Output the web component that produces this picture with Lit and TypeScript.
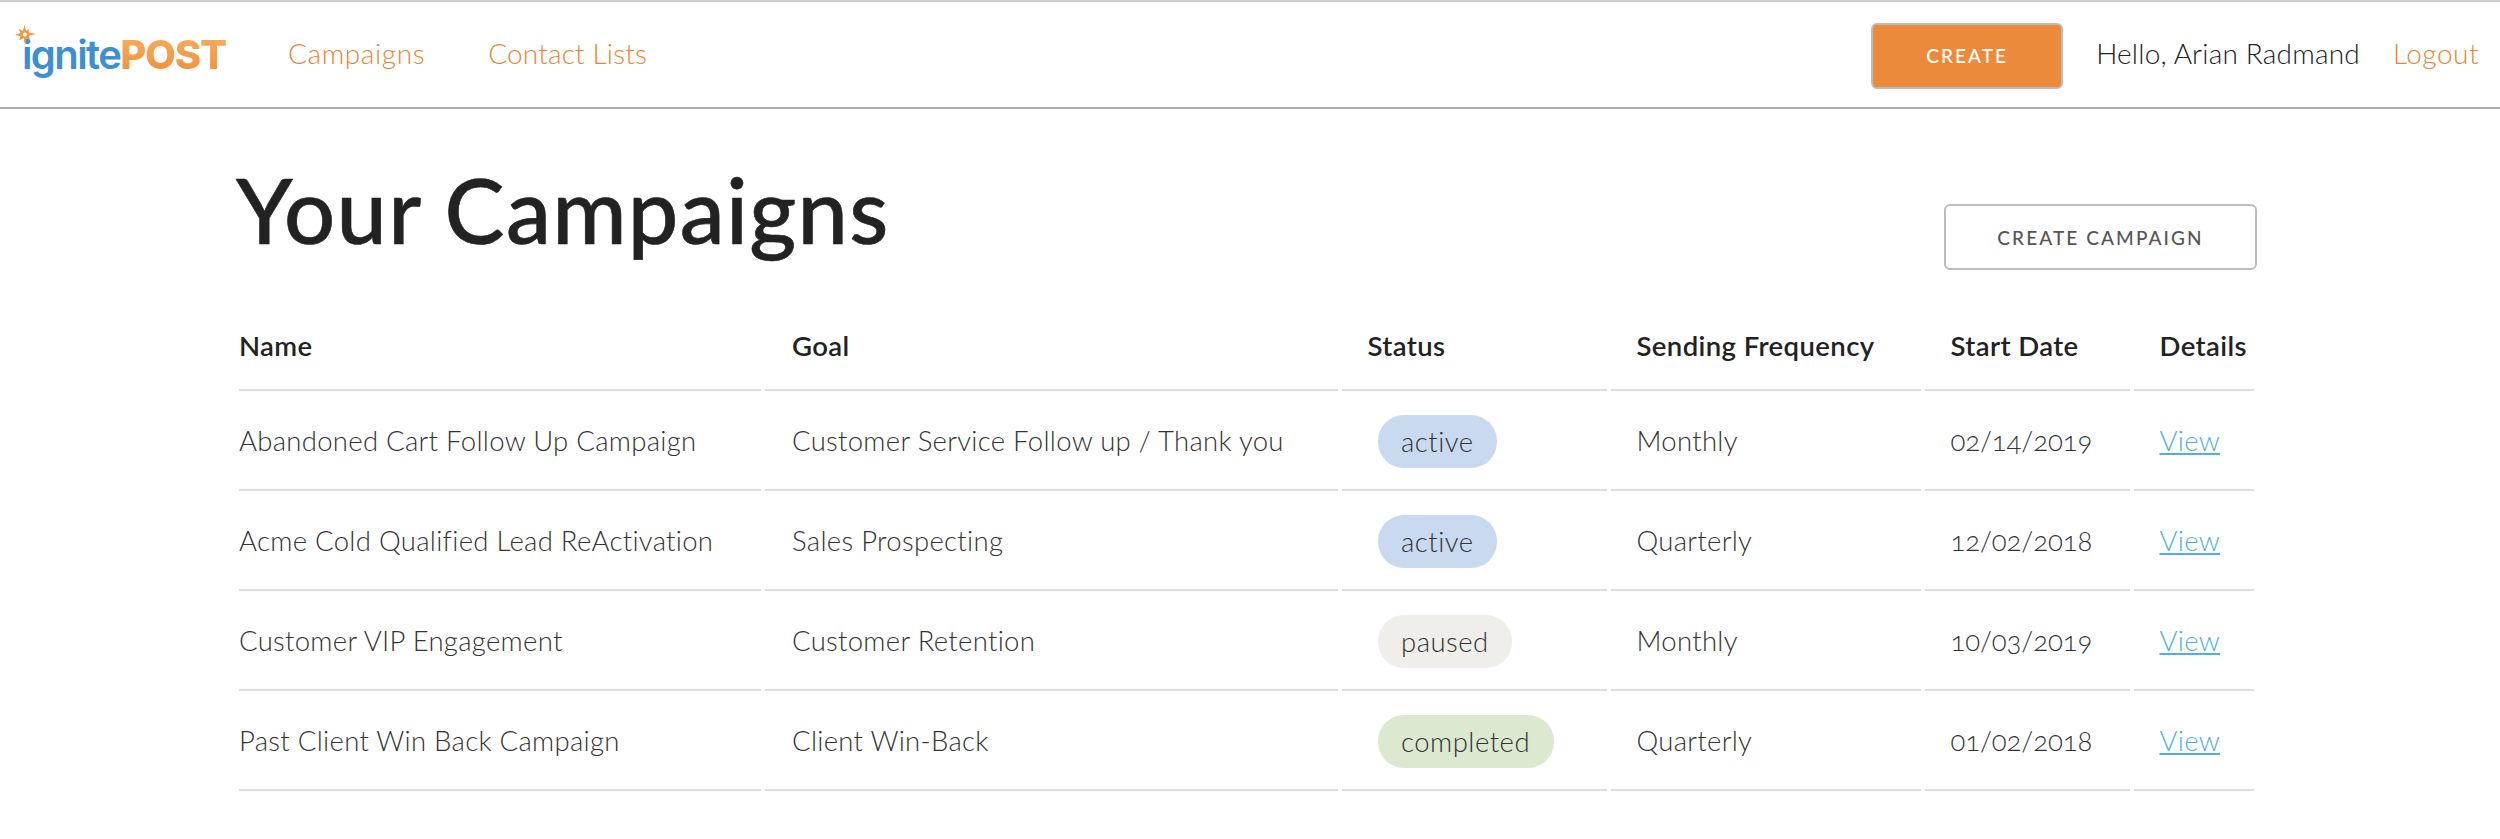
import { LitElement, html, css } from "lit";
import { customElement } from "lit/decorators.js";

type Row = { name: string; goal: string; status: string; freq: string; date: string };
const rows: Row[] = [
  { name: "Abandoned Cart Follow Up Campaign", goal: "Customer Service Follow up / Thank you", status: "active", freq: "Monthly", date: "02/14/2019" },
  { name: "Acme Cold Qualified Lead ReActivation", goal: "Sales Prospecting", status: "active", freq: "Quarterly", date: "12/02/2018" },
  { name: "Customer VIP Engagement", goal: "Customer Retention", status: "paused", freq: "Monthly", date: "10/03/2019" },
  { name: "Past Client Win Back Campaign", goal: "Client Win-Back", status: "completed", freq: "Quarterly", date: "01/02/2018" },
];

@customElement("app-root")
export class AppRoot extends LitElement {
  static styles = css`
    :host { display: block; min-height: 839px; background: #fff; font-family: "Lato", "Open Sans", sans-serif; color: #222; }
    * { box-sizing: border-box; }
    header {
      height: 109px; display: flex; align-items: center; padding: 0 21px 0 15px;
      border-top: 2px solid #cfcfcf; border-bottom: 2px solid #ababab; font-size: 28px; font-weight: 300;
    }
    .logo { position: relative; width: 210px; height: 60px; display: block; flex: none; margin-top: 4px; }
    .wordmark { display: block; padding-left: 7px; font-family: "Inter", sans-serif; font-size: 40px; line-height: 56px; font-weight: 600; letter-spacing: -1.6px; white-space: nowrap; color: #3d8fd3; }
    .wordmark b { font-weight: 800; letter-spacing: -1.2px; background: linear-gradient(#f7b061, #f18c38); -webkit-background-clip: text; background-clip: text; color: transparent; }
    .star { position: absolute; left: 0; top: -2px; width: 22px; height: 20px; }
    nav { display: flex; gap: 63px; margin-left: 63px; margin-top: -3px; }
    a.nav { color: #ec8433; text-decoration: none; letter-spacing: 0.15px; }
    a.nav.first { letter-spacing: 0.6px; }
    .right { margin-left: auto; display: flex; align-items: center; }
    .btn {
      display: flex; align-items: center; justify-content: center; height: 66px; border-radius: 6px; border: 2px solid #bdbdbd;
      font-family: inherit; font-size: 19px; font-weight: 500; letter-spacing: 2.1px; text-transform: uppercase; padding: 0;
    }
    .btn.primary { width: 192px; background: #eb8a3a; color: #fff; margin-top: 2px; }
    .btn.outline { width: 313px; background: #fff; color: #555; margin: 95px 1px 0 auto; flex: none; }
    .hello { margin-left: 33px; color: #222; margin-top: -3px; letter-spacing: 0.2px; }
    .logout { margin-left: 33px; margin-top: -3px; color: #ec8433; letter-spacing: 0.5px; text-decoration: none; }
    main { padding: 0 242px 0 235px; }
    .title-row { display: flex; height: 212px; }
    h1 { margin: 45px 0 0 1px; font-size: 90px; line-height: 110px; font-weight: 500; color: #222; letter-spacing: 1.3px; -webkit-text-stroke: 0.6px #222; }
    table { width: 100%; table-layout: fixed; border-collapse: separate; border-spacing: 4px 0; font-size: 27.5px; }
    th { height: 70px; padding: 8px 0 0 25.5px; text-align: left; font-weight: 600; font-size: 27.5px; color: #222; border-bottom: 2px solid #dedede; vertical-align: top; line-height: 34px; letter-spacing: 0.4px; }
    td { height: 100px; padding: 0 0 0 25.5px; font-weight: 300; color: #333; border-bottom: 2px solid #dedede; white-space: nowrap; letter-spacing: 0.3px; font-variant-numeric: oldstyle-nums; }
    th:first-child, td:first-child { padding-left: 0; }
    th:nth-child(2), td:nth-child(2) { padding-left: 27px; }
    td.date { letter-spacing: -0.1px; }
    .pill { display: inline-flex; align-items: center; height: 53px; padding: 0 23.5px; margin: 2px 0 0 10px; border-radius: 26px; letter-spacing: 0.5px; }
    .active { background: #c9daf0; }
    .paused { background: #efeeeb; }
    .completed { background: #dce8d0; }
    a.view { color: #4fb0dd; text-decoration: underline; }
  `;

  render() {
    return html`
      <header>
        <a class="logo">
          <span class="wordmark">ignite<b>POST</b></span>
          <svg class="star" viewBox="0 0 22 20" aria-hidden="true">
            <path fill="#f09a45" d="M9.5 0 L11 6 L14 4 L13.6 7.4 L21 9 L14 10.8 L15 15 L11.4 12.8 L10.6 20 L8.6 13.2 L4 15.6 L5.6 11.2 L0 10 L5.4 8 L3.6 4 L8 5.8 Z"/>
            <circle cx="9.8" cy="9.4" r="2" fill="#fff"/>
          </svg>
        </a>
        <nav>
          <a class="nav first">Campaigns</a>
          <a class="nav">Contact Lists</a>
        </nav>
        <div class="right">
          <button class="btn primary">Create</button>
          <span class="hello">Hello, Arian Radmand</span>
          <a class="logout">Logout</a>
        </div>
      </header>
      <main>
        <div class="title-row">
          <h1>Your Campaigns</h1>
          <button class="btn outline">Create Campaign</button>
        </div>
        <table>
          <colgroup>
            <col style="width:522px" /><col style="width:573px" /><col style="width:265px" /><col style="width:310px" /><col style="width:205px" /><col />
          </colgroup>
          <thead>
            <tr><th>Name</th><th>Goal</th><th>Status</th><th>Sending Frequency</th><th>Start Date</th><th>Details</th></tr>
          </thead>
          <tbody>
            ${rows.map(
              (r) => html`<tr>
                <td>${r.name}</td>
                <td>${r.goal}</td>
                <td><span class="pill ${r.status}">${r.status}</span></td>
                <td>${r.freq}</td>
                <td class="date">${r.date}</td>
                <td><a class="view">View</a></td>
              </tr>`
            )}
          </tbody>
        </table>
      </main>
    `;
  }
}
